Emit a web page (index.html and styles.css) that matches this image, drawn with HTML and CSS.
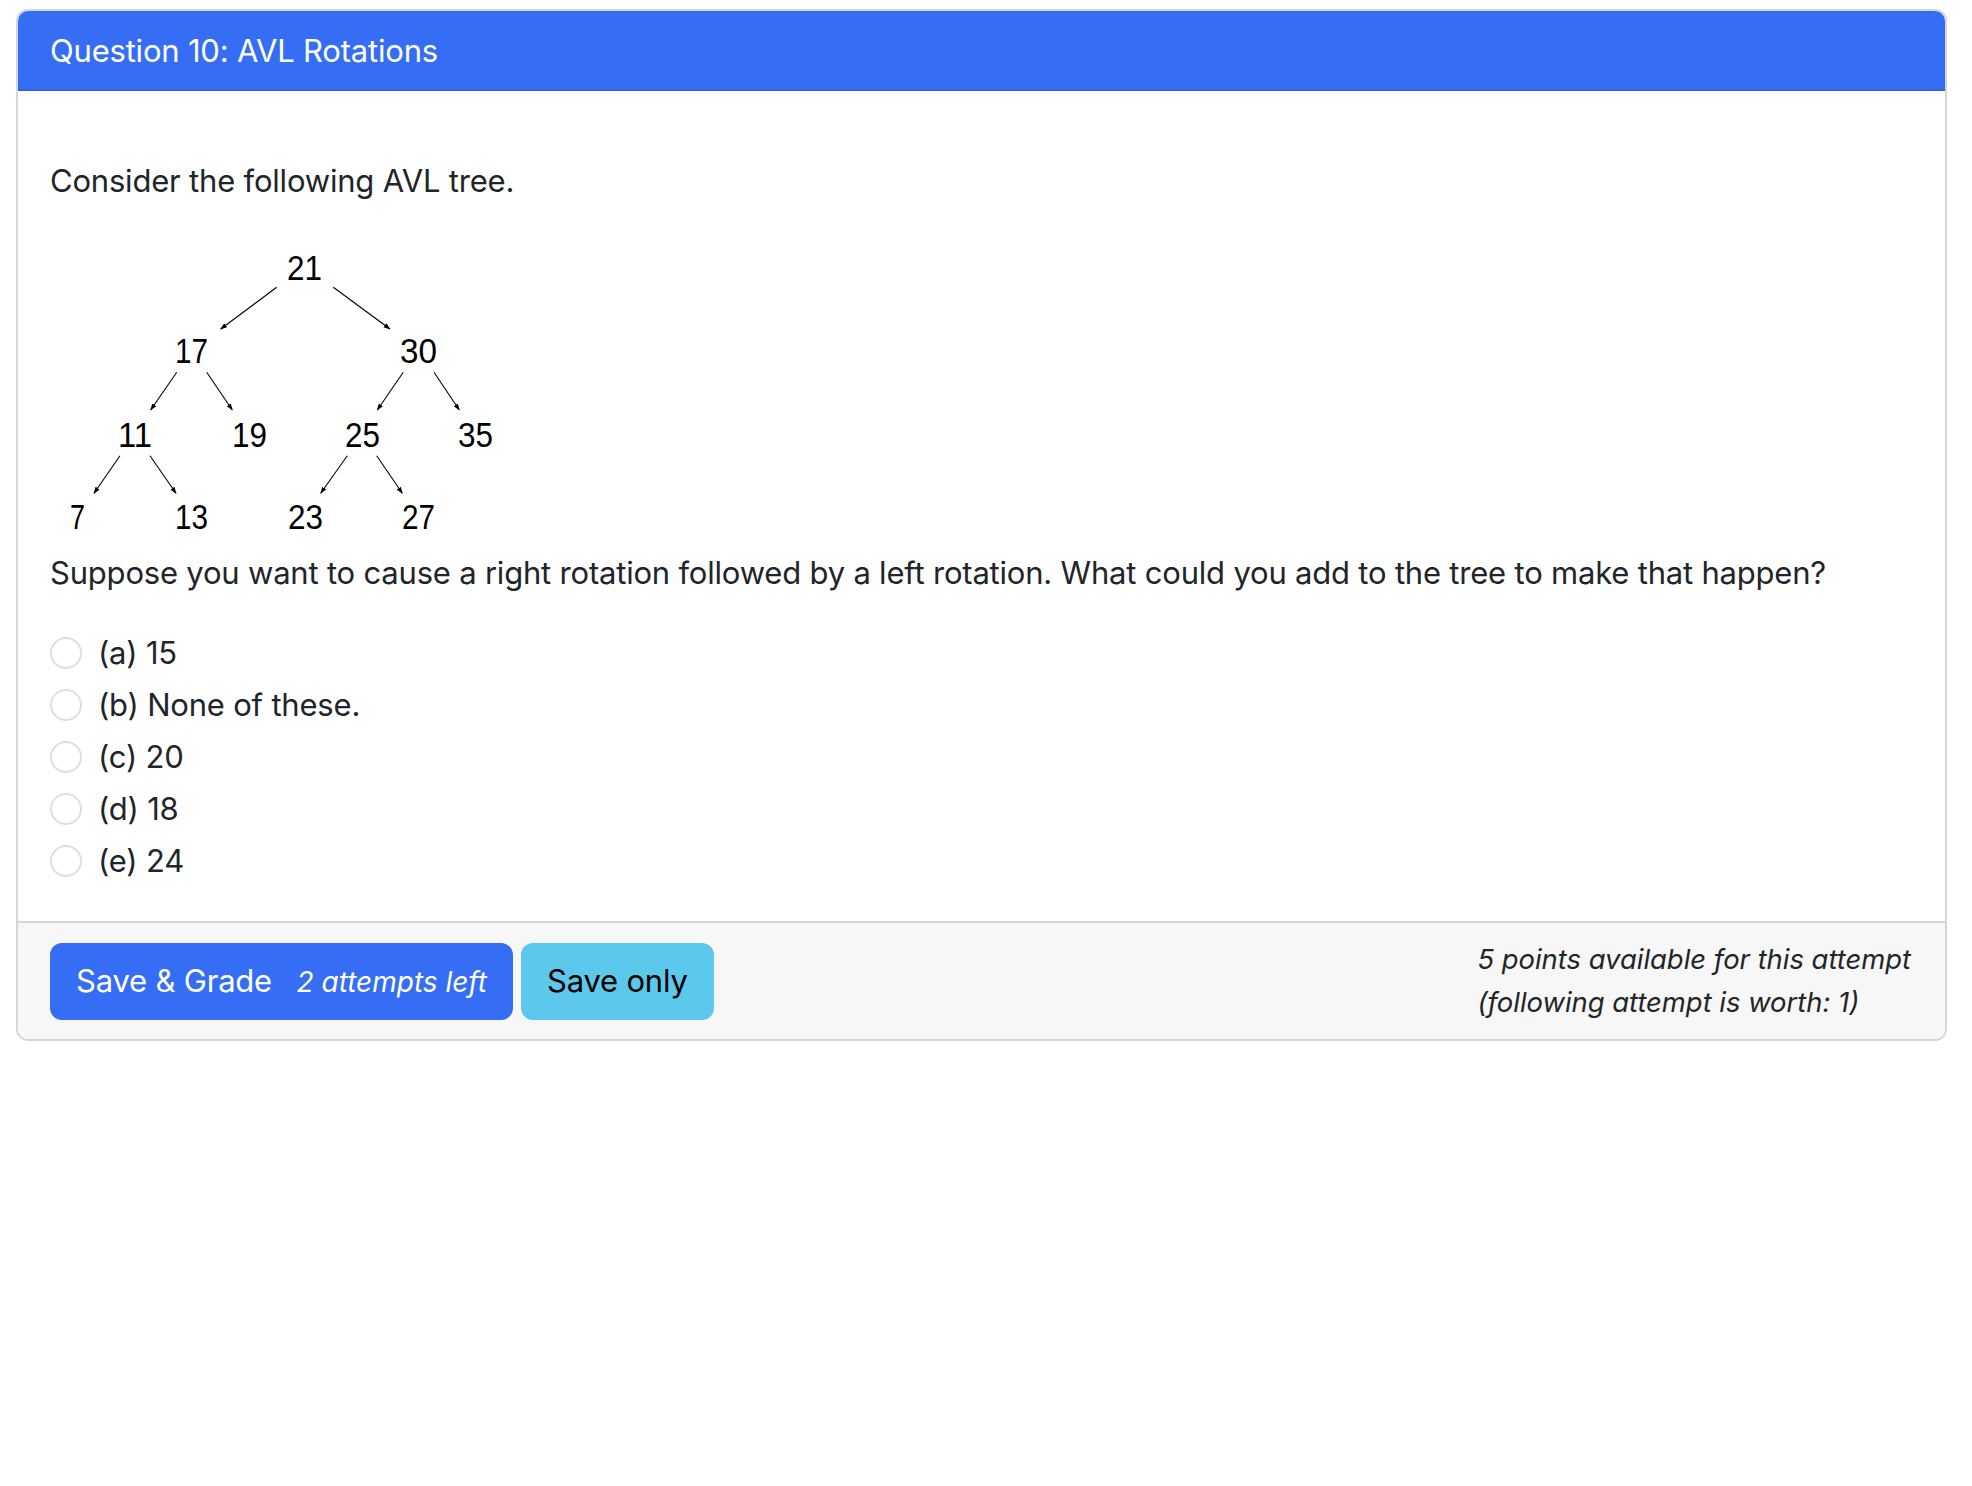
FILE: index.html
```html
<!DOCTYPE html>
<html lang="en">
<head>
<meta charset="utf-8">
<title>Question 10: AVL Rotations</title>
<link rel="stylesheet" href="styles.css">
</head>
<body>
<div class="card">
  <div class="card-header">Question 10: AVL Rotations</div>
  <div class="card-body">
    <p class="lead-p">Consider the following AVL tree.</p>
    <svg class="tree" width="460" height="312" viewBox="50 237 460 312" xmlns="http://www.w3.org/2000/svg">
      <defs>
        <marker id="ah" viewBox="0 0 10 10" refX="9" refY="5" markerWidth="7" markerHeight="7" markerUnits="userSpaceOnUse" orient="auto">
          <path d="M0 1.5 L10 5 L0 8.5 Z" fill="#000"/>
        </marker>
      </defs>
      <g class="edges" stroke="#000" stroke-width="1.1" marker-end="url(#ah)">
        <line x1="276.7" y1="287.3" x2="220.7" y2="329"/>
        <line x1="333.3" y1="287.3" x2="390" y2="329"/>
        <line x1="176.7" y1="372.3" x2="150.7" y2="410"/>
        <line x1="206.7" y1="372.3" x2="232.3" y2="410"/>
        <line x1="403.3" y1="372.3" x2="377.3" y2="410"/>
        <line x1="434" y1="372.3" x2="459.3" y2="410"/>
        <line x1="120" y1="455.7" x2="94" y2="493.3"/>
        <line x1="150" y1="455.7" x2="176" y2="493.3"/>
        <line x1="347.3" y1="455.7" x2="320.7" y2="493.3"/>
        <line x1="376.7" y1="455.7" x2="402.3" y2="493.3"/>
      </g>
      <g class="nodes" text-anchor="middle">
        <text x="304.5" y="280" textLength="35" lengthAdjust="spacingAndGlyphs">21</text>
        <text x="191.5" y="363" textLength="33" lengthAdjust="spacingAndGlyphs">17</text>
        <text x="418.5" y="363" textLength="37" lengthAdjust="spacingAndGlyphs">30</text>
        <text x="135" y="447" textLength="34" lengthAdjust="spacingAndGlyphs">11</text>
        <text x="249.5" y="447" textLength="35" lengthAdjust="spacingAndGlyphs">19</text>
        <text x="362.5" y="447" textLength="35" lengthAdjust="spacingAndGlyphs">25</text>
        <text x="475.5" y="447" textLength="35" lengthAdjust="spacingAndGlyphs">35</text>
        <text x="77.5" y="529" textLength="15" lengthAdjust="spacingAndGlyphs">7</text>
        <text x="191.5" y="529" textLength="33" lengthAdjust="spacingAndGlyphs">13</text>
        <text x="305.5" y="529" textLength="35" lengthAdjust="spacingAndGlyphs">23</text>
        <text x="418.5" y="529" textLength="33" lengthAdjust="spacingAndGlyphs">27</text>
      </g>
    </svg>
    <p class="question">Suppose you want to cause a right rotation followed by a left rotation. What could you add to the tree to make that happen?</p>
    <div class="choices">
      <label class="form-check"><input class="form-check-input" type="radio" name="ans" value="a"><span>(a) 15</span></label>
      <label class="form-check"><input class="form-check-input" type="radio" name="ans" value="b"><span>(b) None of these.</span></label>
      <label class="form-check"><input class="form-check-input" type="radio" name="ans" value="c"><span>(c) 20</span></label>
      <label class="form-check"><input class="form-check-input" type="radio" name="ans" value="d"><span>(d) 18</span></label>
      <label class="form-check"><input class="form-check-input" type="radio" name="ans" value="e"><span>(e) 24</span></label>
    </div>
  </div>
  <div class="card-footer">
    <div class="buttons">
      <button class="btn btn-primary" type="button">Save &amp; Grade <small class="attempts">2 attempts left</small></button>
      <button class="btn btn-info" type="button">Save only</button>
    </div>
    <div class="points">
      <small class="points-text">5 points available for this attempt<br>(following attempt is worth: 1)</small>
    </div>
  </div>
</div>
</body>
</html>
```
FILE: styles.css
```css
html, body {
  margin: 0;
  padding: 0;
  background: #fff;
}
body {
  padding: 9px 25px 0 16px;
  font-family: Inter, "Liberation Sans", sans-serif;
  font-size: 31px;
  letter-spacing: -0.2px;
  line-height: 48px;
  color: #212529;
}
.card {
  border: 2px solid #d6d6d6;
  border-radius: 12px;
  overflow: hidden;
  background: #fff;
}
.card-header {
  background: #356ef4;
  color: #fff;
  padding: 16px 32px 14px;
  border-bottom: 2px solid #2f62d8;
}
.card-body {
  padding: 32px 32px 32px;
}
.lead-p {
  margin: 34px 0 32px;
}
.tree {
  display: block;
}
.nodes text {
  font-family: "Liberation Sans", sans-serif;
  font-size: 35px;
  letter-spacing: 0;
  fill: #000;
}
.question {
  margin: 0 0 32px;
}
.choices {
  display: flex;
  flex-direction: column;
}
.form-check {
  display: flex;
  align-items: flex-start;
  gap: 16px;
  margin-bottom: 4px;
  min-height: 48px;
}
.form-check-input {
  appearance: none;
  -webkit-appearance: none;
  width: 32px;
  height: 32px;
  margin: 8px 0 0 0;
  border: 2px solid #dcdfe2;
  border-radius: 50%;
  background: #fff;
  flex: none;
}
.card-footer {
  background: #f7f7f7;
  border-top: 2px solid #d6d6d6;
  padding: 15px 34px 15px 32px;
  display: flex;
  justify-content: space-between;
  align-items: center;
}
.buttons {
  display: flex;
  gap: 8px;
}
.btn {
  font-family: inherit;
  font-size: 31px;
  letter-spacing: -0.2px;
  line-height: 48px;
  padding: 12px 24px;
  border: 2px solid transparent;
  border-radius: 12px;
  cursor: pointer;
}
.btn-primary {
  background: #356ef4;
  border-color: #356ef4;
  color: #fff;
}
.btn-info {
  background: #5cc8ec;
  border-color: #5cc8ec;
  color: #000;
}
.attempts {
  font-size: 28px;
  letter-spacing: 0;
  font-style: italic;
  margin-left: 16px;
}
.points-text {
  display: block;
  font-size: 27.4px;
  letter-spacing: 0;
  line-height: 43px;
  font-style: italic;
  color: #212529;
}
```
